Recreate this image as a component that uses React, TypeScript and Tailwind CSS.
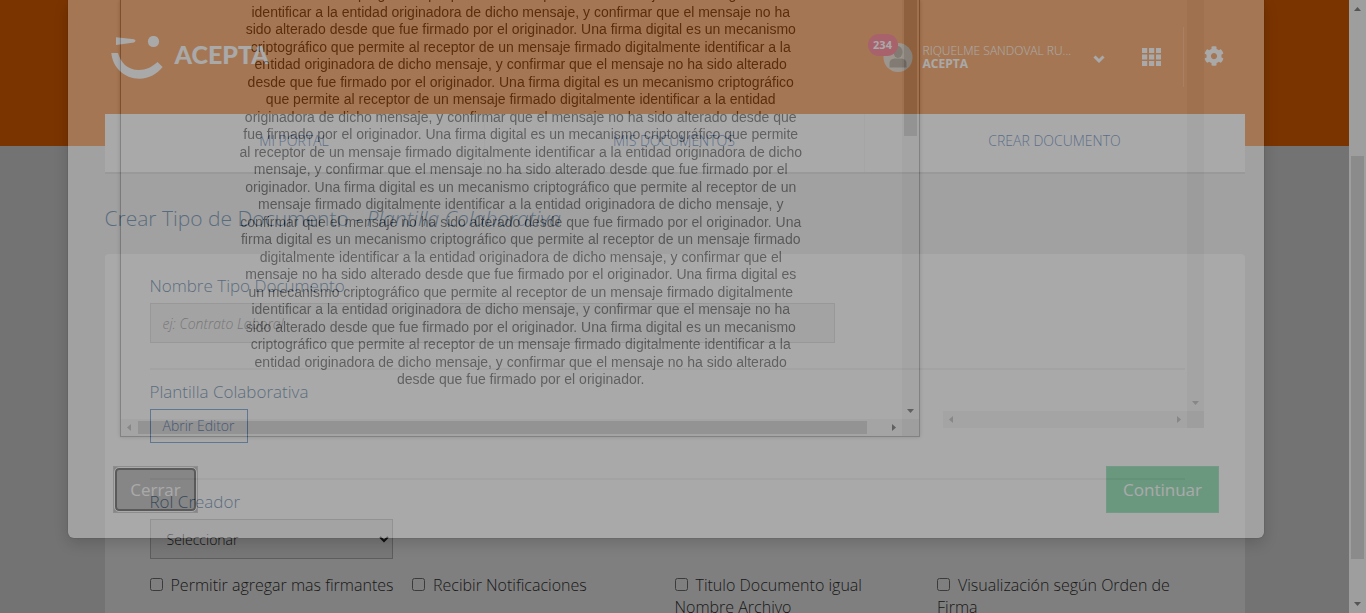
import React from 'react';

const documentLines = [
  'un mecanismo criptográfico que permite al receptor de un mensaje firmado digitalmente',
  'identificar a la entidad originadora de dicho mensaje, y confirmar que el mensaje no ha',
  'sido alterado desde que fue firmado por el originador. Una firma digital es un mecanismo',
  'criptográfico que permite al receptor de un mensaje firmado digitalmente identificar a la',
  'entidad originadora de dicho mensaje, y confirmar que el mensaje no ha sido alterado',
  'desde que fue firmado por el originador. Una firma digital es un mecanismo criptográfico',
  'que permite al receptor de un mensaje firmado digitalmente identificar a la entidad',
  'originadora de dicho mensaje, y confirmar que el mensaje no ha sido alterado desde que',
  'fue firmado por el originador. Una firma digital es un mecanismo criptográfico que permite',
  'al receptor de un mensaje firmado digitalmente identificar a la entidad originadora de dicho',
  'mensaje, y confirmar que el mensaje no ha sido alterado desde que fue firmado por el',
  'originador. Una firma digital es un mecanismo criptográfico que permite al receptor de un',
  'mensaje firmado digitalmente identificar a la entidad originadora de dicho mensaje, y',
  'confirmar que el mensaje no ha sido alterado desde que fue firmado por el originador. Una',
  'firma digital es un mecanismo criptográfico que permite al receptor de un mensaje firmado',
  'digitalmente identificar a la entidad originadora de dicho mensaje, y confirmar que el',
  'mensaje no ha sido alterado desde que fue firmado por el originador. Una firma digital es',
  'un mecanismo criptográfico que permite al receptor de un mensaje firmado digitalmente',
  'identificar a la entidad originadora de dicho mensaje, y confirmar que el mensaje no ha',
  'sido alterado desde que fue firmado por el originador. Una firma digital es un mecanismo',
  'criptográfico que permite al receptor de un mensaje firmado digitalmente identificar a la',
  'entidad originadora de dicho mensaje, y confirmar que el mensaje no ha sido alterado',
  'desde que fue firmado por el originador.',
];

const options = [
  'Permitir agregar mas firmantes',
  'Recibir Notificaciones',
  'Titulo Documento igual Nombre Archivo',
  'Visualización según Orden de Firma',
];

type Direction = 'up' | 'down' | 'left' | 'right';

const arrowPoints: Record<Direction, string> = {
  up: '1,6 4.5,2 8,6',
  down: '1,3 4.5,7 8,3',
  left: '6,1 2,4.5 6,8',
  right: '3,1 7,4.5 3,8',
};

function Arrow({ direction, className }: { direction: Direction; className: string }) {
  return (
    <svg viewBox="0 0 9 9" className={`size-[9px] shrink-0 ${className}`} aria-hidden="true">
      <polygon points={arrowPoints[direction]} fill="currentColor" />
    </svg>
  );
}

function Logo() {
  return (
    <a href="#inicio" className="flex items-start gap-3 text-white" aria-label="Acepta">
      <svg viewBox="0 0 52 43" className="h-[43px] w-[52px]" fill="currentColor" aria-hidden="true">
        <path d="M5 1.2 L23 3.3 Q26 4.6 23 6.6 L5 9 Z" />
        <circle cx="42.5" cy="5.5" r="5.6" />
        <path d="M0.3 17 L7 17 C9.5 26 16 34 28 34 C35 34 41 31 46.5 26 L51.6 31 C46 38 38 42.7 28.500 42.700 C13 42.700 1.500 31 0.300 17 Z" />
      </svg>
      <span className="pt-0.5 font-['Lato',sans-serif] text-[25px] leading-8 font-black">ACEPTA</span>
    </a>
  );
}

function Header() {
  return (
    <header className="bg-[#f46800] pb-8">
      <div className="mx-auto flex h-[114px] max-w-[1140px] items-center justify-between pr-[21px] pl-1.5">
        <Logo />
        <div className="flex items-center text-white">
          <div className="relative mr-2.5 size-[30px]">
            <svg viewBox="0 0 30 30" className="size-[30px]" aria-hidden="true">
              <circle cx="15" cy="15.500" r="14.500" fill="#dcc7b0" />
              <ellipse cx="15" cy="10" rx="4.500" ry="6" fill="#8b7660" />
              <path d="M6.500 25.500 V20.500 Q7 17 11.500 16.500 H18.500 Q23 17 23.500 20.500 V25.500 Z" fill="#8b7660" />
            </svg>
            <span className="absolute -top-2 -left-[15px] flex h-[22px] w-[30px] items-center justify-center rounded-full bg-[#fc2a48] text-[11px] font-bold">
              234
            </span>
          </div>
          <div className="w-[150px] text-xs leading-[13px] font-light">
            <p className="whitespace-nowrap">RIQUELME SANDOVAL RU...</p>
            <p className="font-bold">ACEPTA</p>
          </div>
          <button type="button" aria-label="Cambiar usuario" className="mt-1 ml-5">
            <svg viewBox="0 0 12 9" className="h-[9px] w-3" aria-hidden="true">
              <path d="M1.500 1.500 L6 6 L10.500 1.500" fill="none" stroke="currentColor" strokeWidth="3" />
            </svg>
          </button>
          <button type="button" aria-label="Aplicaciones" className="ml-[37px]">
            <svg viewBox="0 0 19 18" className="h-[18px] w-[19px]" fill="currentColor" aria-hidden="true">
              {[0, 6.5, 13].map((y) =>
                [0, 7, 14].map((x) => <rect key={`${x}-${y}`} x={x} y={y} width="5.200" height="5" />),
              )}
            </svg>
          </button>
          <span className="ml-[22px] h-[60px] w-px bg-white/20" />
          <button type="button" aria-label="Configuración" className="mb-0.5 ml-5">
            <svg viewBox="0 0 512 512" className="size-5" fill="currentColor" aria-hidden="true">
              <path d="M487.400 315.700l-42.600-24.600c4.300-23.200 4.300-47 0-70.200l42.600-24.600c4.900-2.800 7.100-8.600 5.500-14-11.100-35.600-30-67.800-54.700-94.600-3.800-4.100-10-5.100-14.800-2.300L380.800 110c-17.900-15.400-38.500-27.300-60.800-35.100V25.800c0-5.600-3.900-10.500-9.400-11.700-36.700-8.200-74.300-7.800-109.200 0-5.500 1.200-9.400 6.100-9.400 11.700V75c-22.200 7.900-42.800 19.800-60.800 35.100L88.700 85.500c-4.900-2.800-11-1.900-14.800 2.300-24.700 26.700-43.600 58.900-54.700 94.600-1.700 5.400.6 11.200 5.500 14L67.300 221c-4.300 23.200-4.300 47 0 70.200l-42.600 24.600c-4.900 2.800-7.100 8.600-5.500 14 11.100 35.600 30 67.800 54.700 94.600 3.800 4.100 10 5.100 14.800 2.300l42.600-24.600c17.900 15.400 38.500 27.300 60.800 35.100v49.200c0 5.600 3.900 10.500 9.400 11.700 36.700 8.200 74.300 7.800 109.200 0 5.500-1.200 9.400-6.100 9.400-11.700v-49.200c22.200-7.900 42.800-19.800 60.800-35.100l42.600 24.600c4.900 2.800 11 1.900 14.800-2.300 24.700-26.700 43.600-58.900 54.700-94.600 1.500-5.500-.7-11.300-5.600-14.100zM256 336c-44.100 0-80-35.900-80-80s35.900-80 80-80 80 35.900 80 80-35.900 80-80 80z" />
            </svg>
          </button>
        </div>
      </div>
    </header>
  );
}

function Navigation() {
  return (
    <nav className="-mt-8 grid grid-cols-3 divide-x divide-[#f3f3f3] border-b-2 border-[#d0d0d0] bg-white text-center text-sm leading-5 font-light text-[#0d4da0]">
      <a href="#portal" className="pt-[17px] pb-[21px]">MI PORTAL</a>
      <a href="#documentos" className="pt-[17px] pb-[21px]">MIS DOCUMENTOS</a>
      <a href="#crear" className="pt-[17px] pb-[21px]">CREAR DOCUMENTO</a>
    </nav>
  );
}

function DocumentForm() {
  return (
    <form className="mt-[22px] rounded-t bg-white px-[45px] pt-5 text-base font-light">
      <label htmlFor="nombre" className="block text-[17px] leading-6 text-[#0d4a80]">
        Nombre Tipo Documento
      </label>
      <input
        id="nombre"
        type="text"
        placeholder="ej: Contrato Laboral"
        className="mt-[5px] block h-10 w-full max-w-[685px] border border-[#ccc] bg-[#eee] px-3 text-sm placeholder:text-[#666] placeholder:italic"
      />
      <hr className="mt-[25px] mr-[15px] border-t-2 border-[#eee]" />
      <h2 className="mt-[10px] text-[17px] leading-6 text-[#0d4a80]">Plantilla Colaborativa</h2>
      <button type="button" className="mt-[5px] h-[34px] border border-[#1f6fb8] px-3 text-sm text-[#0d4da0]">
        Abrir Editor
      </button>
      <hr className="mt-[35px] mr-[15px] border-t-2 border-[#eee]" />
      <label htmlFor="rol" className="mt-[10px] block text-[17px] leading-6 text-[#0d4a80]">
        Rol Creador
      </label>
      <select id="rol" className="mt-[5px] block h-10 w-[243px] border border-[#bbb] bg-[#eee] px-3 text-sm text-[#222]">
        <option>Seleccionar</option>
      </select>
      <div className="mt-[15px] grid grid-cols-4 leading-[22px] text-[#333]">
        {options.map((option) => (
          <label key={option} className="pr-5 first:pr-0 last:pr-0">
            <input type="checkbox" className="mr-2 size-[13px]" />
            {option}
          </label>
        ))}
      </div>
    </form>
  );
}

function DocumentPane() {
  return (
    <section className="flex h-[437px] min-w-0 flex-[800] border border-t-0 border-[#888] shadow-[0_0_4px_rgba(0,0,0,0.3)]">
      <div className="flex min-w-0 flex-1 flex-col">
        <div className="flex min-h-0 flex-1 flex-col justify-end overflow-hidden pb-[31px] pl-[18px]">
          <div className="flex h-[403px] shrink-0 flex-col items-center font-['Liberation_Sans',sans-serif] text-sm leading-[18px] whitespace-nowrap text-[#222]">
            {documentLines.map((line, index) => (
              <p key={index} className="min-h-0 flex-1">{line}</p>
            ))}
          </div>
        </div>
        <div className="flex h-[17px] items-center bg-[#eee] px-1">
          <Arrow direction="left" className="text-[#999]" />
          <span className="ml-1 h-[13px] flex-1 bg-[#bbb]" />
          <Arrow direction="right" className="ml-[22px] text-[#222]" />
        </div>
      </div>
      <div className="flex w-[17px] flex-col items-center bg-[#eee]">
        <span className="h-[136px] w-[13px] bg-[#bbb]" />
        <Arrow direction="down" className="mt-auto mb-1 text-[#222]" />
        <span className="h-[17px] w-full bg-[#ddd]" />
      </div>
    </section>
  );
}

function SidePane() {
  return (
    <section className="flex h-[428px] min-w-0 flex-[261]">
      <div className="flex flex-1 flex-col justify-end">
        <div className="flex h-[17px] items-center justify-between bg-[#eee] px-1">
          <Arrow direction="left" className="text-[#999]" />
          <Arrow direction="right" className="text-[#999]" />
        </div>
      </div>
      <div className="flex w-[17px] flex-col items-center bg-[#eee]">
        <Arrow direction="down" className="mt-auto mb-1 text-[#999]" />
        <span className="h-[17px] w-full bg-[#ddd]" />
      </div>
    </section>
  );
}

function EditorDialog() {
  return (
    <div className="absolute inset-0 bg-black/50 pr-[85px] pl-[68px]">
      <div
        role="dialog"
        aria-label="Editor de plantilla"
        className="rounded-b-md bg-white pb-[25px] opacity-33 shadow-[0_5px_15px_rgba(0,0,0,0.5),0_0_0_1px_rgba(0,0,0,0.2)]"
      >
        <div className="flex items-start gap-[23px] pr-[60px] pl-[52px]">
          <DocumentPane />
          <SidePane />
        </div>
        <div className="mt-[29px] flex justify-between px-[45px] text-[17px] text-white">
          <button
            type="button"
            className="relative h-[47px] w-[85px] border border-[#aaa] bg-[#959595] after:absolute after:inset-px after:rounded-sm after:border-2 after:border-[#101010] after:outline after:outline-white"
          >
            Cerrar
          </button>
          <button type="button" className="h-[47px] border border-[#5fcf95] bg-[#41cb80] px-4">
            Continuar
          </button>
        </div>
      </div>
    </div>
  );
}

function PageScrollbar() {
  return (
    <div className="flex w-[17px] shrink-0 flex-col items-center bg-[#9e9e9e] py-[5px] text-[#555]" aria-hidden="true">
      <Arrow direction="up" className="" />
      <span className="mt-[142px] mb-[40px] w-[13px] flex-1 bg-[#8b8b8b]" />
      <Arrow direction="down" className="" />
    </div>
  );
}

export default function App() {
  return (
    <div className="flex h-screen overflow-hidden font-['Open_Sans',sans-serif]">
      <div className="relative min-w-0 flex-1 overflow-hidden bg-[#e6e6e6]">
        <Header />
        <main className="mx-auto max-w-[1140px]">
          <Navigation />
          <h1 className="mt-[30px] text-[21px] leading-7 font-light text-[#0d4a80]">
            Crear Tipo de Documento - <em>Plantilla Colaborativa</em>
          </h1>
          <DocumentForm />
        </main>
        <EditorDialog />
      </div>
      <PageScrollbar />
    </div>
  );
}
